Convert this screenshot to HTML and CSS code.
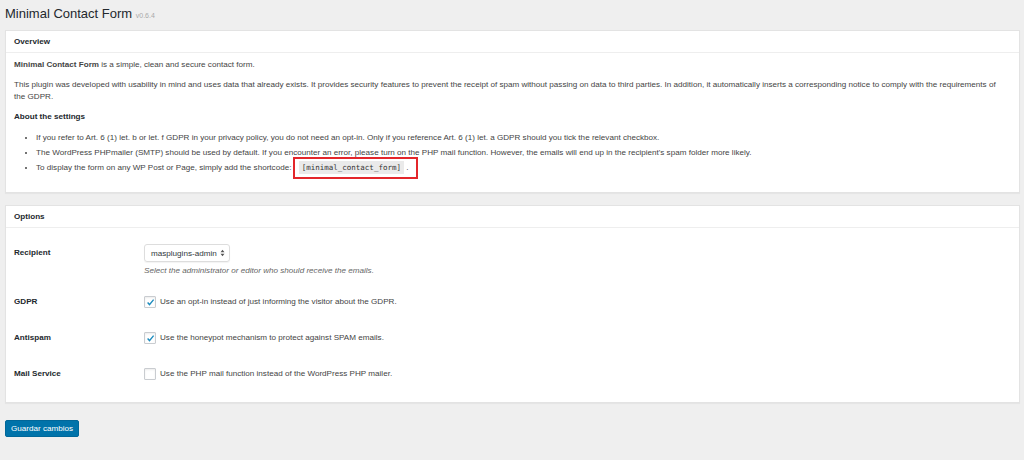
FILE: index.html
```html
<!DOCTYPE html>
<html lang="en">
<head>
    <meta charset="UTF-8">
    <title>Minimal Contact Form</title>
    <link rel="stylesheet" href="styles.css">
</head>
<body>
    <div class="wrap">
        <h1>Minimal Contact Form <small>v0.6.4</small></h1>

        <div class="postbox">
            <h2 class="hndle">Overview</h2>
            <div class="inside">
                <p><strong>Minimal Contact Form</strong> is a simple, clean and secure contact form.</p>
                <p>This plugin was developed with usability in mind and uses data that already exists. It provides security features to prevent the receipt of spam without passing on data to third parties. In addition, it automatically inserts a corresponding notice to comply with the requirements of the GDPR.</p>
                <h3>About the settings</h3>
                <ul>
                    <li>If you refer to Art. 6 (1) let. b or let. f GDPR in your privacy policy, you do not need an opt-in. Only if you reference Art. 6 (1) let. a GDPR should you tick the relevant checkbox.</li>
                    <li>The WordPress PHPmailer (SMTP) should be used by default. If you encounter an error, please turn on the PHP mail function. However, the emails will end up in the recipient's spam folder more likely.</li>
                    <li>To display the form on any WP Post or Page, simply add the shortcode: <span class="highlight"><code>[minimal_contact_form]</code> .</span></li>
                </ul>
            </div>
        </div>

        <form class="settings">
            <div class="postbox">
                <h2 class="hndle">Options</h2>
                <div class="inside form-table">
                    <div class="row first">
                        <label class="field-label" for="recipient">Recipient</label>
                        <div class="field">
                            <div class="select">
                                <span>masplugins-admin</span>
                                <svg width="5" height="8" viewBox="0 0 5 8"><path d="M0.5 3.2 L2.5 0.8 L4.5 3.2 Z M0.5 4.8 L2.5 7.2 L4.5 4.8 Z" fill="#555"/></svg>
                            </div>
                            <p class="description">Select the administrator or editor who should receive the emails.</p>
                        </div>
                    </div>
                    <div class="row">
                        <span class="field-label">GDPR</span>
                        <label class="field check">
                            <span class="box checked"><svg width="9" height="9" viewBox="0 0 9 9"><path d="M1.6 4.6 L3.5 6.6 L7.6 1.6" fill="none" stroke="#1e8cbe" stroke-width="1.4"/></svg></span>
                            Use an opt-in instead of just informing the visitor about the GDPR.
                        </label>
                    </div>
                    <div class="row">
                        <span class="field-label">Antispam</span>
                        <label class="field check">
                            <span class="box checked"><svg width="9" height="9" viewBox="0 0 9 9"><path d="M1.6 4.6 L3.5 6.6 L7.6 1.6" fill="none" stroke="#1e8cbe" stroke-width="1.4"/></svg></span>
                            Use the honeypot mechanism to protect against SPAM emails.
                        </label>
                    </div>
                    <div class="row">
                        <span class="field-label">Mail Service</span>
                        <label class="field check">
                            <span class="box"></span>
                            Use the PHP mail function instead of the WordPress PHP mailer.
                        </label>
                    </div>
                </div>
            </div>

            <button type="submit" class="button-primary">Guardar cambios</button>
        </form>
    </div>
</body>
</html>
```

FILE: styles.css
```css
body {
    margin: 0;
    background: #efefef;
    font-family: "Liberation Sans", Arial, sans-serif;
    font-size: 8.1px;
    color: #444;
    height: 460px;
    overflow: hidden;
}
.wrap {
    padding: 0 4px 0 5px;
}
h1 {
    margin: 0;
    padding-top: 6px;
    height: 24px;
    box-sizing: border-box;
    font-size: 13px;
    line-height: 16px;
    font-weight: normal;
    color: #23282d;
}
h1 small {
    font-size: 7px;
    color: #aaa;
}
.postbox {
    background: #fff;
    border: 1px solid #e3e3e3;
    box-shadow: 0 1px 1px rgba(0, 0, 0, 0.04);
    margin-top: 6px;
}
.settings .postbox {
    margin-top: 12px;
}
.hndle {
    margin: 0;
    padding: 0 8px;
    height: 21px;
    line-height: 21px;
    font-size: 8.1px;
    font-weight: bold;
    color: #23282d;
    border-bottom: 1px solid #eee;
}
.inside {
    padding: 0 16px 15px 8px;
}
.inside p {
    margin: 6px 0 8px;
    line-height: 12px;
}
.inside h3 {
    margin: 8px 0 0;
    font-size: 8.1px;
    line-height: 12px;
    color: #23282d;
}
ul {
    margin: 9px 0 0;
    padding-left: 22px;
}
li {
    line-height: 12px;
    margin-bottom: 3px;
}
.highlight {
    display: inline-block;
    border: 2px solid #e3262b;
    padding: 3px 8px 3px 4px;
    margin: -6px 0 -6px -1px;
    line-height: 12px;
}
code {
    font-family: "DejaVu Sans Mono", "Liberation Mono", monospace;
    font-size: 7.5px;
    background: #eaeaea;
    padding: 2px 3px;
    color: #333;
}
.form-table {
    padding: 4px 8px 10px;
}
.row {
    display: grid;
    grid-template-columns: 130px 1fr;
    padding: 12px 0;
    align-items: start;
}
.row.first {
    padding-bottom: 7px;
}
.field-label {
    font-weight: bold;
    color: #23282d;
    line-height: 12px;
}
.row.first .field-label {
    line-height: 18px;
}
.select {
    display: inline-flex;
    align-items: center;
    gap: 3px;
    height: 18px;
    box-sizing: border-box;
    padding: 0 4px 0 6px;
    border: 1px solid #ddd;
    border-radius: 3px;
    color: #32373c;
    box-shadow: 0 1px 1px rgba(0, 0, 0, 0.05);
}
.description {
    margin: 3px 0 0 !important;
    font-style: italic;
    color: #666;
    line-height: 12px;
}
.check {
    display: flex;
    align-items: center;
    gap: 4px;
    line-height: 12px;
}
.box {
    width: 10px;
    height: 10px;
    border: 1px solid #c9ccd0;
    border-radius: 1px;
    background: #fff;
    display: flex;
    align-items: center;
    justify-content: center;
    box-shadow: inset 0 1px 2px rgba(0, 0, 0, 0.08);
}
.button-primary {
    margin-top: 17px;
    height: 17px;
    padding: 0 5px;
    background: #0073aa;
    border: 1px solid #006799;
    border-radius: 2px;
    color: #fff;
    font-family: "Liberation Sans", Arial, sans-serif;
    font-size: 8.1px;
    cursor: pointer;
}
```
